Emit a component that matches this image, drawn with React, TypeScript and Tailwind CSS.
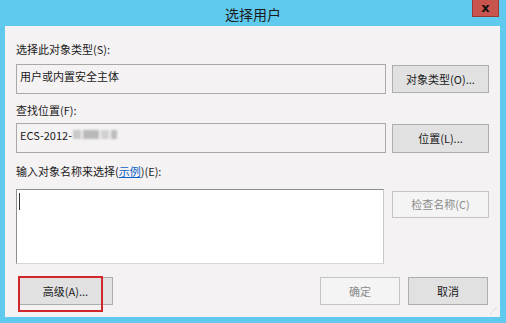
import React from "react";

const font = { fontFamily: '"Noto Sans CJK SC", "Noto Sans", sans-serif' };

function Btn({ children, disabled, className = "" }: { children: React.ReactNode; disabled?: boolean; className?: string }) {
  return (
    <div
      className={
        "flex items-center justify-center text-[11px] border " +
        (disabled
          ? "bg-[#f4f4f4] border-[#c4c4c4] text-[#8a8a8a] "
          : "bg-[#e1e1e1] border-[#adadad] text-[#1a1a1a] ") +
        className
      }
    >
      {children}
    </div>
  );
}

export default function App() {
  return (
    <div className="w-[506px] h-[323px] bg-[#5fc9ee] flex flex-col overflow-hidden" style={font}>
      {/* Title bar */}
      <div className="h-[26px] relative flex items-center justify-center shrink-0">
        <span className="text-[14px] text-[#1b1b1b] leading-none mt-[1px]">选择用户</span>
        <div className="absolute right-[7px] top-0 w-[27px] h-[17px] bg-[#c9534d] border border-t-0 border-[#9a3a36] flex items-center justify-center">
          <span className="text-[13px] font-bold leading-none text-[#111] -mt-[2px]" style={{ fontFamily: '"DejaVu Sans", sans-serif' }}>x</span>
        </div>
      </div>
      {/* Panel */}
      <div className="ml-[5px] w-[495px] h-[291px] bg-[#f5f2f4] flex flex-col pl-[11px] pr-[11px] relative">
        <div className="mt-[15px] text-[11px] leading-[16px] text-[#1a1a1a]">选择此对象类型(S):</div>
        <div className="mt-[7px] flex items-start">
          <div className="w-[370px] h-[30px] border border-[#a9a9a9] bg-[#f5f2f4] px-[3px] pt-[3px] text-[11px] leading-[16px] text-[#1a1a1a]">
            用户或内置安全主体
          </div>
          <Btn className="ml-[6px] mt-[1px] w-[97px] h-[28px]">对象类型(O)...</Btn>
        </div>
        <div className="mt-[8px] text-[11px] leading-[16px] text-[#1a1a1a]">查找位置(F):</div>
        <div className="mt-[5px] flex items-start">
          <div className="w-[370px] h-[30px] border border-[#a9a9a9] bg-[#f5f2f4] px-[3px] pt-[3px] text-[11px] leading-[16px] text-[#1a1a1a] flex items-start">
            <span>ECS-2012-</span>
            <span className="ml-[1px] mt-[3px] flex items-center gap-[2px] blur-[1.2px]">
              <span className="w-[8px] h-[9px] bg-[#c9c9c9]" />
              <span className="w-[16px] h-[9px] bg-[#b9b9b9]" />
              <span className="w-[8px] h-[9px] bg-[#d0d0d0]" />
              <span className="w-[6px] h-[9px] bg-[#bdbdbd]" />
            </span>
          </div>
          <Btn className="ml-[6px] mt-[1px] w-[97px] h-[29px]">位置(L)...</Btn>
        </div>
        <div className="mt-[10px] text-[11px] leading-[16px] text-[#1a1a1a]">
          输入对象名称来选择(<span className="text-[#0a64c8] underline">示例</span>)(E):
        </div>
        <div className="mt-[10px] flex items-start">
          <div className="w-[368px] h-[75px] border border-[#8e8e8e] border-r-[#c8c8c8] border-b-[#d6d6d6] bg-white pl-[2px] pt-[3px]">
            <div className="w-[1px] h-[17px] bg-[#333]" />
          </div>
          <Btn disabled className="ml-[8px] mt-[2px] w-[97px] h-[27px]">检查名称(C)</Btn>
        </div>
        <div className="mt-[13px] flex items-start">
          <div className="relative">
            <Btn className="ml-[2px] w-[95px] h-[28px]">高级(A)...</Btn>
            <div className="absolute left-[2px] -top-[1px] w-[85px] h-[36px] border-2 border-[#d0262c] pointer-events-none" />
          </div>
          <div className="flex-1" />
          <Btn disabled className="w-[80px] h-[28px]">确定</Btn>
          <Btn className="ml-[8px] w-[80px] h-[28px] border-[#8e8e8e]">取消</Btn>
          <div className="w-[1px]" />
        </div>
        <div className="absolute right-[3px] bottom-[3px] text-[7px] leading-none text-[#aaa]">⋰</div>
      </div>
    </div>
  );
}
